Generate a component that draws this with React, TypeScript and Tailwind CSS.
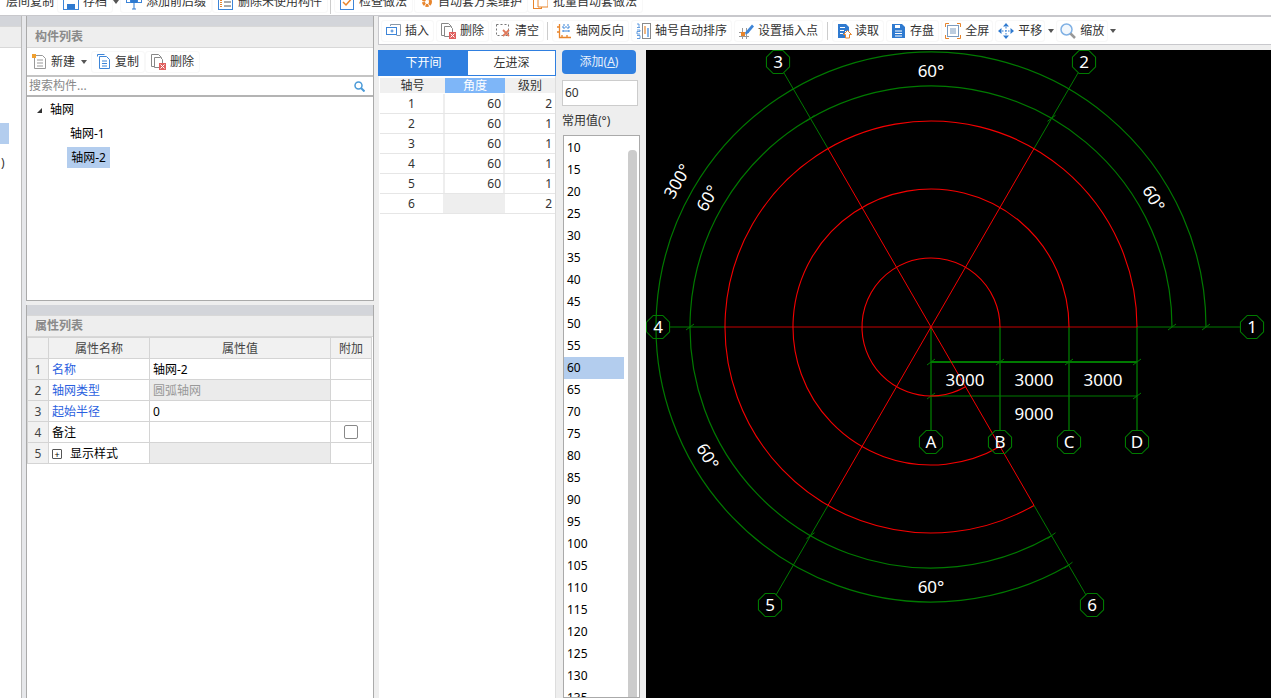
import type { ReactNode } from "react";

const font = { fontFamily: '"Noto Sans", "Noto Sans CJK SC", sans-serif' };

function Svg({ children, w = 15 }: { children: ReactNode; w?: number }) {
  return (
    <svg width={w} height={16} viewBox={`0 0 ${w} 16`} fill="none" className="shrink-0">
      {children}
    </svg>
  );
}

// 小图标
const icons: Record<string, ReactNode> = {
  insert: (
    <Svg>
      <path d="M4.500 3V1.500h10v11h-4" stroke="#8a98a8" />
      <rect x="0.5" y="4.500" width="10" height="7" fill="#fff" stroke="#3d85d8" />
      <path d="M6 6.500v3M4.500 8h3" stroke="#3d85d8" />
    </Svg>
  ),
  del: (
    <Svg>
      <path d="M.5 .5h7l3 3v9h-10z" stroke="#888" fill="#fff" />
      <path d="M3.500 3.500h6l2 2v8h-8z" stroke="#888" fill="#fff" />
      <rect x="8" y="9" width="7" height="7" fill="#e0605f" />
      <path d="M9.500 10.500l4 4M13.500 10.500l-4 4" stroke="#fff" />
    </Svg>
  ),
  clear: (
    <Svg>
      <rect x="0.5" y="1.500" width="12" height="11" stroke="#777" strokeDasharray="2 2" />
      <path d="M7 7l6 6M13 7l-6 6" stroke="#e0785a" strokeWidth="1.800" />
    </Svg>
  ),
  reverse: (
    <Svg>
      <path d="M3.500 1v13.500H15M1 4h2.500M1 9h2.500M6 12v2.500M11 12v2.500" stroke="#e8852c" strokeWidth="1.300" />
      <path d="M8 1v9M12 1v9M6 4h8M6 8h8" stroke="#3d85d8" strokeDasharray="2 1" />
    </Svg>
  ),
  sort: (
    <Svg>
      <rect x="6.500" y="0.500" width="8" height="15" stroke="#8a8a8a" />
      <path d="M1 1h2v3M1 4.500h3M1 7h3v1.500H1V11h3M1 12.500h3v3H1" stroke="#3d85d8" strokeWidth=".8" />
      <path d="M9 3v8" stroke="#e8852c" strokeWidth="1.200" />
      <path d="M12 5v9" stroke="#3d85d8" strokeWidth="1.200" />
    </Svg>
  ),
  point: (
    <Svg>
      <path d="M0 9.500h10M0 13.500h10M3.500 5v11M7.500 5v11" stroke="#999" />
      <path d="M7 8.500l6-7 2 2-6 7-3 1z" fill="#3d85d8" />
      <rect x="2" y="9" width="4" height="4" fill="#e8852c" />
    </Svg>
  ),
  read: (
    <Svg>
      <path d="M1 1h8l3 3v4H8v7H1z" fill="#2f7ad0" />
      <path d="M3 4.500h5M3 7.500h4M3 10.500h3" stroke="#fff" />
      <path d="M10.500 7.500l4 4h-2v3.500h-4v-3.500h-2z" fill="#fff" stroke="#e8852c" />
    </Svg>
  ),
  save: (
    <Svg>
      <path d="M1 1h10l3 3v11H1z" fill="#2f7ad0" />
      <path d="M4 8h7M4 10.500h7M4 13h7" stroke="#fff" />
      <rect x="4" y="2" width="5" height="3" fill="#fff" />
    </Svg>
  ),
  full: (
    <Svg w={16}>
      <path d="M.5 4V.5H4M12 .5h3.500V4M15.500 12v3.500H12M4 15.500H.5V12" stroke="#e8852c" />
      <rect x="2.500" y="2.500" width="11" height="11" stroke="#7d9cc0" />
      <path d="M5 6h6M5 8h6M5 10h6" stroke="#7d9cc0" />
    </Svg>
  ),
  move: (
    <Svg w={16}>
      <path d="M8 0l3 3.500H5zM8 16l3-3.500H5zM0 8l3.500-3v6zM16 8l-3.500-3v6z" fill="#2f7ad0" />
      <path d="M8 4v8M4 8h8" stroke="#2f7ad0" strokeDasharray="1.500 1.500" />
    </Svg>
  ),
  zoom: (
    <Svg w={16}>
      <circle cx="6.500" cy="6.500" r="5.500" stroke="#7fb0e4" strokeWidth="1.500" fill="#f2f7fc" />
      <path d="M10.500 10.500l4.500 4.500" stroke="#999" strokeWidth="2.500" />
    </Svg>
  ),
  archive: (
    <Svg w={16}>
      <rect x="0.5" y="0.5" width="15" height="15" stroke="#3d85d8" fill="#fff" />
      <rect x="4" y="10" width="8" height="5" fill="#2f7ad0" />
    </Svg>
  ),
  prefix: (
    <Svg w={16}>
      <rect x="0.5" y="3.500" width="4" height="5" stroke="#3d85d8" />
      <rect x="11.500" y="3.500" width="4" height="5" stroke="#3d85d8" />
      <rect x="5" y="3" width="6" height="6" fill="#2f7ad0" />
      <path d="M8 1v14M6 15h4" stroke="#2f7ad0" />
    </Svg>
  ),
  unused: (
    <Svg>
      <rect x="0.5" y="0.5" width="14" height="15" stroke="#3d85d8" />
      <path d="M6 4h7M6 8h7M6 12h7" stroke="#555" />
      <path d="M3 2v11" stroke="#e8852c" strokeWidth="2" strokeDasharray="1 1" />
    </Svg>
  ),
  check: (
    <Svg w={16}>
      <rect x="0.5" y="2.500" width="13" height="13" stroke="#3d85d8" />
      <path d="M3 8l3 3 7-8" stroke="#e8852c" strokeWidth="1.500" />
    </Svg>
  ),
  auto: (
    <Svg w={13}>
      <circle cx="7" cy="8" r="3.500" stroke="#e8852c" strokeWidth="3" strokeDasharray="3 .8" />
    </Svg>
  ),
  batch: (
    <Svg>
      <rect x="0.5" y="0.5" width="8" height="14" stroke="#e8852c" />
      <path d="M5 1h7l3 3v9H5z" stroke="#e8852c" fill="#fff" />
    </Svg>
  ),
  newItem: (
    <Svg>
      <path d="M2.500 1.500h8l3 3v10h-11z" stroke="#999" fill="#fff" />
      <path d="M5 6h6M5 9h6M5 12h6" stroke="#999" />
      <rect x="0" y="0" width="4" height="4" fill="#f0a030" />
    </Svg>
  ),
  copy: (
    <Svg>
      <path d="M.5 2.500V.5h7" stroke="#3d85d8" />
      <path d="M2.500 2.500h7l3 3v9h-10z" stroke="#3d85d8" fill="#fff" />
      <path d="M5 7h5M5 9.500h5M5 12h5" stroke="#3d85d8" />
    </Svg>
  ),
};

function Caret({ className = "" }: { className?: string }) {
  return <span className={`inline-block w-0 h-0 border-x-[3px] border-x-transparent border-t-[4px] border-t-[#555] ${className}`} />;
}

function Btn({ icon, label, gap = "gap-[4px]", className = "px-[5px]" }: { icon: string; label: string; gap?: string; className?: string }) {
  return (
    <div className={`flex items-center h-[22px] rounded-[3px] border border-[#f8f8f8] text-[#333] whitespace-nowrap ${gap} ${className}`}>
      {icons[icon]}
      <span>{label}</span>
    </div>
  );
}

function TopBar() {
  return (
    <div className="h-[15px] shrink-0 overflow-hidden bg-white">
      <div className="flex items-center h-[24px] -mt-[10px] text-[12px] text-[#333] whitespace-nowrap">
        <span className="ml-[6px] w-[51px]">层间复制</span>
        <Btn icon="archive" label="存档" />
        <Caret className="mr-[1px]" />
        <Btn icon="prefix" label="添加前后缀" />
        <Btn icon="unused" label="删除未使用构件" gap="gap-[5px]" className="px-[5px]" />
        <div className="w-px h-[24px] bg-[#ccc] ml-[2px] mr-[3px]" />
        <Btn icon="check" label="检查做法" gap="gap-[3px]" />
        <Btn icon="auto" label="自动套方案维护" gap="gap-[5px]" className="px-[5px] ml-[1px]" />
        <Btn icon="batch" label="批量自动套做法" gap="gap-[5px]" className="px-[5px] -ml-[1px]" />
      </div>
    </div>
  );
}

function PanelHead({ title }: { title: string }) {
  return (
    <div>
      <div className="h-[10px] bg-[#d3d5da]" />
      <div className="h-[22px] bg-[#eeeeee] border-y border-[#d8d8d8] flex items-center pl-[8px] text-[12px] font-bold text-[#8a8a8a]">{title}</div>
    </div>
  );
}

function ComponentList() {
  return (
    <div className="h-[285px] shrink-0 border-x border-b border-[#aaa] bg-white flex flex-col">
      <PanelHead title="构件列表" />
      <div className="h-[29px] flex items-center border-b-2 border-[#c4c4c4] text-[12px]">
        <div className="flex items-center gap-[4px] pl-[5px] text-[#333]">
          {icons.newItem}
          <span>新建</span>
          <Caret className="ml-[2px]" />
        </div>
        <Btn icon="copy" label="复制" gap="gap-[3px]" className="px-[5px] ml-[4px]" />
        <Btn icon="del" label="删除" />
      </div>
      <div className="h-[20px] flex items-center justify-between px-[2px] border-b-2 border-[#b4b4b4] text-[12px] text-[#888]">
        <span>搜索构件...</span>
        <svg width="11" height="11" viewBox="0 0 11 11" fill="none" className="mr-[6px]">
          <circle cx="4.500" cy="4.500" r="3.500" stroke="#4a9ad8" strokeWidth="1.500" />
          <path d="M7 7l3.500 3.500" stroke="#4a9ad8" strokeWidth="2" />
        </svg>
      </div>
      <div className="flex-1 text-[12px] text-black pt-[1px]">
        <div className="h-[24px] flex items-center pl-[10px]">
          <span className="w-0 h-0 border-l-[5px] border-l-transparent border-b-[5px] border-b-[#333]" />
          <span className="ml-[8px]">轴网</span>
        </div>
        <div className="h-[24px] mb-[1px] flex items-center pl-[43px]">轴网-1</div>
        <div className="h-[21px] w-[43px] ml-[40px] flex items-center justify-center bg-[#b3cdee]">轴网-2</div>
      </div>
    </div>
  );
}

const props = [
  { n: 1, name: "名称", value: "轴网-2", blue: true },
  { n: 2, name: "轴网类型", value: "圆弧轴网", blue: true, muted: true },
  { n: 3, name: "起始半径", value: "0", blue: true },
  { n: 4, name: "备注", value: "", check: true },
  { n: 5, name: "显示样式", value: "", plus: true, muted: true },
];

function PropertyList() {
  const cell = "border border-[#d4d4d4] px-[3px] pt-[2px] h-[21px] font-normal";
  return (
    <div className="flex-1 border-x border-[#aaa] bg-white mt-[4px]">
      <PanelHead title="属性列表" />
      <table className="table-fixed border-collapse text-[12px] w-[344px]">
        <thead>
          <tr className="bg-[#f1f1f1] text-[#444]">
            <th className={`${cell} w-[21px]`} />
            <th className={`${cell} w-[101px]`}>属性名称</th>
            <th className={`${cell} w-[181px]`}>属性值</th>
            <th className={`${cell} w-[41px]`}>附加</th>
          </tr>
        </thead>
        <tbody>
          {props.map(p => (
            <tr key={p.n}>
              <td className={`${cell} bg-[#f1f1f1] text-center text-[#444]`}>{p.n}</td>
              <td className={`${cell} ${p.blue ? "text-[#2a5fe0]" : "text-black"}`}>
                {p.plus ? (
                  <span className="flex items-center gap-[8px]">
                    <span className="w-[10px] h-[10px] border border-[#555] rounded-[1px] flex items-center justify-center text-[9px] leading-none">+</span>
                    {p.name}
                  </span>
                ) : p.name}
              </td>
              <td className={`${cell} ${p.muted ? "bg-[#ebebeb] text-[#999]" : "text-black"}`}>{p.value}</td>
              <td className={`${cell} text-center`}>
                {p.check && <span className="block w-[14px] h-[14px] mx-auto -mt-[2px] border border-[#888] rounded-[2px] bg-white" />}
              </td>
            </tr>
          ))}
        </tbody>
      </table>
    </div>
  );
}

function DrawBar() {
  return (
    <div className="h-[29px] shrink-0 flex items-center gap-[2px] pl-[2px] bg-white border-y border-[#c8c8cc] border-l text-[12px]">
      <Btn icon="insert" label="插入" className="px-[4px]" />
      <Btn icon="del" label="删除" className="px-[4px]" />
      <Btn icon="clear" label="清空" className="px-[4px]" />
      <div className="w-px h-[18px] bg-[#ccc] mx-[1px]" />
      <Btn icon="reverse" label="轴网反向" gap="gap-[5px]" className="ml-[1px] pl-[3px] pr-[4px]" />
      <Btn icon="sort" label="轴号自动排序" className="px-[4px]" />
      <Btn icon="point" label="设置插入点" className="px-[4px]" />
      <div className="w-px h-[18px] bg-[#ccc] mx-[1px] ml-[2px]" />
      <Btn icon="read" label="读取" gap="gap-[3px]" className="ml-[1px] px-[4px]" />
      <Btn icon="save" label="存盘" className="px-[4px]" />
      <Btn icon="full" label="全屏" className="px-[3px]" />
      <Btn icon="move" label="平移" className="px-[2px]" />
      <Caret className="ml-[1px]" />
      <Btn icon="zoom" label="缩放" className="px-[3px]" />
      <Caret />
    </div>
  );
}

const rows = [
  [1, 60, 2],
  [2, 60, 1],
  [3, 60, 1],
  [4, 60, 1],
  [5, 60, 1],
  [6, "", 2],
];

function AxisTable() {
  return (
    <div className="w-[178px] shrink-0 flex flex-col">
      <div className="h-[26px] flex border border-[#2f7fe0] text-[12px]">
        <div className="w-[89px] bg-[#2f7fe0] text-white flex items-center justify-center">下开间</div>
        <div className="flex-1 bg-white text-[#333] flex items-center justify-center">左进深</div>
      </div>
      <div className="flex-1 bg-white border-r border-[#ddd] ml-[1px] text-[12px] text-[#333] pt-[2px] pl-[1px]">
        <div className="grid grid-cols-[65px_60px_50px] h-[15px] leading-[15px] text-center mb-[1px]">
          <div className="bg-[#f0f0f0]">轴号</div>
          <div className="bg-[#7eb6f8] text-white">角度</div>
          <div className="bg-[#f0f0f0]">级别</div>
        </div>
        {rows.map(r => (
          <div key={r[0]} className="grid grid-cols-[65px_60px_50px] h-[20px] leading-[19px] border-b border-[#e6e6e6]">
            <div className="text-center border-r-2 border-[#eeeeee]">{r[0]}</div>
            <div className={`text-right pr-[2px] border-r-2 border-[#eeeeee] ${r[1] === "" ? "bg-[#eeeeee]" : ""}`}>{r[1]}</div>
            <div className="text-right pr-[3px]">{r[2]}</div>
          </div>
        ))}
      </div>
    </div>
  );
}

const common = Array.from({ length: 27 }, (_, i) => 10 + i * 5);

function AddColumn() {
  return (
    <div className="w-[78px] ml-[6px] shrink-0 flex flex-col text-[12px] text-[#333]">
      <div className="w-[74px] h-[24px] rounded-[4px] bg-[#2f7fe0] text-[#e8f0fb] flex items-center justify-center">添加(<span className="underline">A</span>)</div>
      <div className="w-[76px] h-[26px] mt-[6px] bg-white border border-[#ccc] flex items-center pl-[2px]">60</div>
      <div className="h-[29px] flex items-center">常用值(°)</div>
      <div className="flex-1 min-h-0 ml-[1px] bg-white border border-[#aaa] relative overflow-hidden pt-[1px]">
        {common.map(v => (
          <div key={v} className={`h-[22px] w-[60px] flex items-center pl-[3px] text-black ${v === 60 ? "bg-[#b3cdee]" : ""}`}>{v}</div>
        ))}
        <div className="absolute left-[64px] top-[14px] bottom-0 w-[9px] rounded-t-[4px] bg-[#cccccc]" />
      </div>
    </div>
  );
}

// 圆弧轴网绘图
const cx = 931;
const cy = 327;
const GREEN = "#007a00";
const RED = "#f50000";

function polar(r: number, deg: number) {
  const a = (deg * Math.PI) / 180;
  return [cx + r * Math.cos(a), cy - r * Math.sin(a)];
}

function arc(r: number) {
  const [x, y] = polar(r, -60);
  return `M${cx + r} ${cy}A${r} ${r} 0 1 0 ${x} ${y}`;
}

function Bubble({ x, y, t }: { x: number; y: number; t: string }) {
  const pts = Array.from({ length: 8 }, (_, i) => {
    const a = ((22.5 + i * 45) * Math.PI) / 180;
    return `${x + 12.5 * Math.cos(a)},${y + 12.5 * Math.sin(a)}`;
  }).join(" ");
  return (
    <g>
      <polygon points={pts} stroke={GREEN} strokeWidth="1.100" fill="none" />
      <text x={x} y={y + 6} fontSize="17" fill="#fff" textAnchor="middle">{t}</text>
    </g>
  );
}

function Tick({ x, y }: { x: number; y: number }) {
  return <path d={`M${x - 4} ${y + 3}L${x + 4} ${y - 3}`} stroke={GREEN} />;
}

function Label({ x, y, t, rot = 0 }: { x: number; y: number; t: string; rot?: number }) {
  return (
    <text x={x} y={y} fontSize="17" fill="#fff" textAnchor="middle" dominantBaseline="central" transform={`rotate(${rot} ${x} ${y})`}>{t}</text>
  );
}

const spokes = [
  { deg: 0, end: [1240, 327], outer: true },
  { deg: 60, end: [1078, 73], outer: false },
  { deg: 120, end: [784, 73], outer: false },
  { deg: 180, end: [670, 327], outer: false },
  { deg: 240, end: [776, 595], outer: false },
  { deg: 300, end: [1086, 595], outer: true },
];

function Canvas() {
  const xs = [931, 1000, 1069, 1137];
  return (
    <div className="flex-1 min-w-0 bg-black ml-[6px]">
      <svg width="625" height="648" viewBox="646 50 625 648" className="block" style={font}>
        {[241, 275].map(r => <path key={r} d={arc(r)} stroke={GREEN} strokeWidth="1.200" fill="none" />)}
        {spokes.map(s => {
          const [x1, y1] = polar(206, s.deg);
          const [x, y] = s.end;
          return <line key={s.deg} x1={x1} y1={y1} x2={x} y2={y} stroke={GREEN} />;
        })}
        {spokes.flatMap(s => (s.outer ? [241, 275] : [241]).map(r => {
          const [x, y] = polar(r, s.deg);
          return <Tick key={`${s.deg}-${r}`} x={x} y={y} />;
        }))}
        {xs.map(x => <line key={x} x1={x} y1={cy} x2={x} y2={431} stroke={GREEN} strokeWidth="1.300" />)}
        <line x1={931} y1={362} x2={1137} y2={362} stroke={GREEN} strokeWidth="1.800" />
        <line x1={931} y1={396} x2={1137} y2={396} stroke={GREEN} strokeWidth="1.200" />
        {xs.map(x => <Tick key={x} x={x} y={362} />)}
        <Tick x={931} y={396} />
        <Tick x={1137} y={396} />
        {[69, 138, 206].map(r => <path key={r} d={arc(r)} stroke={RED} strokeWidth="1.100" fill="none" />)}
        {spokes.map(s => {
          const [x, y] = polar(206, s.deg);
          return <line key={s.deg} x1={cx} y1={cy} x2={x} y2={y} stroke={RED} strokeWidth={s.deg % 180 === 0 ? 0.8 : 1} />;
        })}
        <Bubble x={1252} y={327} t="1" />
        <Bubble x={1084} y={62} t="2" />
        <Bubble x={778} y={62} t="3" />
        <Bubble x={658} y={327} t="4" />
        <Bubble x={770} y={605} t="5" />
        <Bubble x={1092} y={605} t="6" />
        <Bubble x={931} y={442} t="A" />
        <Bubble x={1000} y={442} t="B" />
        <Bubble x={1069} y={442} t="C" />
        <Bubble x={1137} y={442} t="D" />
        <Label x={931} y={70} t="60°" />
        <Label x={931} y={586} t="60°" />
        <Label x={677} y={181} t="300°" rot={-60} />
        <Label x={707} y={198} t="60°" rot={-60} />
        <Label x={1154} y={198} t="60°" rot={60} />
        <Label x={708} y={456} t="60°" rot={60} />
        <Label x={965} y={379} t="3000" />
        <Label x={1034} y={379} t="3000" />
        <Label x={1103} y={379} t="3000" />
        <Label x={1034} y={413} t="9000" />
      </svg>
    </div>
  );
}

export default function App() {
  return (
    <div className="w-[1271px] h-[698px] overflow-hidden flex flex-col bg-white" style={font}>
      <TopBar />
      <div className="flex-1 min-h-0 flex border-t border-[#c8c8cc] bg-[#eeeeee]">
        {/* 左侧导航 */}
        <div className="w-[22px] shrink-0 bg-white border-r border-[#bbb] flex flex-col text-[12px]">
          <PanelHead title="" />
          <div className="h-[75px]" />
          <div className="h-[21px] w-[9px] bg-[#b3cdee]" />
          <div className="h-[28px] flex items-end pl-[1px] text-[#333]">)</div>
        </div>
        <div className="w-[4px] shrink-0 bg-[#e6e7ea]" />
        <div className="w-[348px] shrink-0 flex flex-col">
          <ComponentList />
          <PropertyList />
        </div>
        <div className="w-[4px] shrink-0" />
        <div className="flex-1 min-w-0 flex flex-col">
          <DrawBar />
          <div className="flex-1 min-h-0 flex pt-[5px]">
            <AxisTable />
            <AddColumn />
            <Canvas />
          </div>
        </div>
      </div>
    </div>
  );
}
